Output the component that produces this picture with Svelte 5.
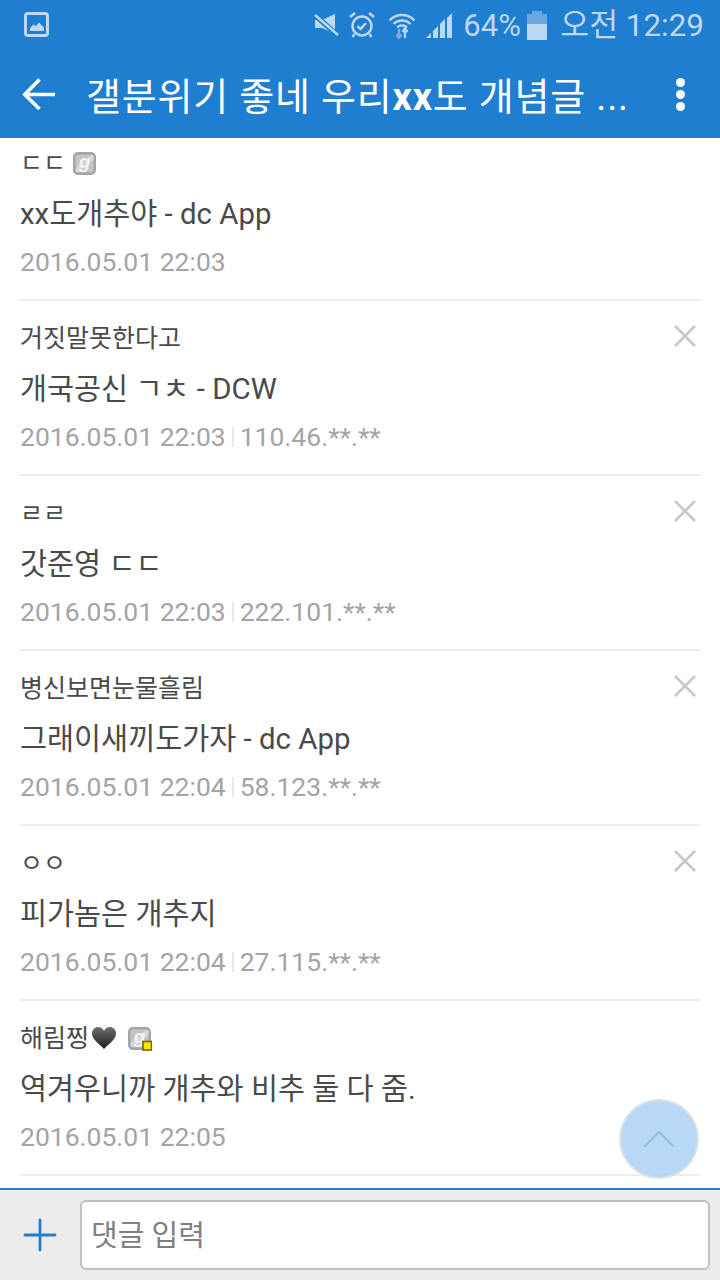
<script>
  const rows = [
    { name: 'ㄷㄷ', text: 'xx도개추야 - dc App', date: '2016.05.01 22:03', badge: true },
    { name: '거짓말못한다고', text: '개국공신 ㄱㅊ - DCW', date: '2016.05.01 22:03', ip: '110.46.**.**', del: true },
    { name: 'ㄹㄹ', text: '갓준영 ㄷㄷ', date: '2016.05.01 22:03', ip: '222.101.**.**', del: true },
    { name: '병신보면눈물흘림', text: '그래이새끼도가자 - dc App', date: '2016.05.01 22:04', ip: '58.123.**.**', del: true },
    { name: 'ㅇㅇ', text: '피가놈은 개추지', date: '2016.05.01 22:04', ip: '27.115.**.**', del: true },
    { name: '해림찡', text: '역겨우니까 개추와 비추 둘 다 줌.', date: '2016.05.01 22:05', heart: true, badge: true, fixed: true }
  ];
</script>

{#snippet gallogBadge(fixed)}
  <svg class="badge" viewBox="0 0 24 24" width="24" height="24">
    <rect x="1.200" y="1.200" width="20.600" height="20.600" rx="3.500" fill="#c4c4c4" stroke="#a4a4a4" stroke-width="2.400"/>
    <path d="M3 16L18 3h2.500v5L6 20H3z" fill="#d8d8d8"/>
    <text x="11.500" y="15.500" text-anchor="middle" class="badge-g">g</text>
    {#if fixed}
      <rect x="15" y="14.500" width="8.500" height="8.500" fill="#ffe600" stroke="#7a6400" stroke-width="1.600"/>
    {/if}
  </svg>
{/snippet}

<div class="screen">
  <header class="header">
    <div class="status">
      <svg class="pic" viewBox="0 0 26 26" width="26" height="26">
        <rect x="1.500" y="1.500" width="22" height="22" rx="2.500" fill="none" stroke="#bcd8f3" stroke-width="3"/>
        <path d="M6 19v-3l3.500-3.500 2.500 1.500 3-3.500 5 5v3.500z" fill="#bcd8f3"/>
      </svg>
      <div class="status-right">
        <svg viewBox="0 0 26 26" width="26" height="26">
          <path d="M2 8h7L22 2v20L9 16H2z" fill="#bcd8f3"/>
          <path d="M1 2l23 21" stroke="#1f7ecf" stroke-width="5.500"/>
          <path d="M2 3l23 20" stroke="#bcd8f3" stroke-width="2.400"/>
        </svg>
        <svg viewBox="0 0 28 28" width="28" height="28" fill="none" stroke="#bcd8f3" stroke-width="2.400">
          <circle cx="14" cy="15" r="9.500"/>
          <path d="M9.500 15l3 3 5.500-6M2 6l5-4M26 6l-5-4M6.500 23l-2 3M21.500 23l2 3"/>
        </svg>
        <svg class="wifi" viewBox="0 0 28 28" width="28" height="28" fill="none">
          <path d="M1.500 9.500a17 17 0 0 1 25 0M5.500 13a12 12 0 0 1 17 0M9 16.500a7 7 0 0 1 10 0" stroke="#bcd8f3" stroke-width="2.400"/>
          <path d="M11 18v9M8.500 23.500l2.500 3.500 2.500-3.500" stroke="#7fb2e3" stroke-width="2.200"/>
          <path d="M17 27v-9M14.500 21l2.500-3.500 2.500 3.500" stroke="#bcd8f3" stroke-width="2.200"/>
        </svg>
        <svg class="signal" viewBox="0 0 28 28" width="28" height="28">
          <path d="M1 27l5-5v5z" fill="#bcd8f3"/>
          <path d="M8 20l5-5v12H8z" fill="#bcd8f3"/>
          <path d="M15 13l5-5v19h-5z" fill="#bcd8f3"/>
          <path d="M22 7l5-5v25h-5z" fill="#bcd8f3"/>
        </svg>
        <span class="pct">64%</span>
        <span class="battery"><i></i></span>
        <span class="clock">오전 12:29</span>
      </div>
    </div>
    <div class="toolbar">
      <svg class="back" viewBox="0 0 34 34" width="34" height="34" fill="none" stroke="#fff" stroke-width="3.600">
        <path d="M33 17.500H3M17.500 2.500L2.800 17.500 17.500 32"/>
      </svg>
      <div class="title">갤분위기 좋네 우리<b>xx</b>도 개념글 ...</div>
      <div class="more"><i></i><i></i><i></i></div>
    </div>
  </header>

  <main class="list">
    <div class="rows">
      {#each rows as row}
        <div class="row">
          <div class="name">
            <span>{row.name}</span>
            {#if row.heart}
              <svg class="heart" viewBox="0 0 26 24" width="26" height="24">
                <defs>
                  <linearGradient id="hg" x1="0" y1="0" x2="0" y2="1">
                    <stop offset="0" stop-color="#6e6e6e"/>
                    <stop offset="1" stop-color="#1e1e1e"/>
                  </linearGradient>
                </defs>
                <path d="M13 23C7 17 1 13 1 7.500 1 3.500 4 1 7 1c2.600 0 4.800 1.400 6 3.800C14.200 2.400 16.400 1 19 1c3 0 6 2.500 6 6.500C25 13 19 17 13 23z" fill="url(#hg)"/>
              </svg>
            {/if}
            {#if row.badge}
              {@render gallogBadge(row.fixed)}
            {/if}
          </div>
          <div class="text">{row.text}</div>
          <div class="meta">
            <span>{row.date}</span>
            {#if row.ip}
              <i class="bar"></i>
              <span>{row.ip}</span>
            {/if}
          </div>
          {#if row.del}
            <svg class="del" viewBox="0 0 24 24" width="24" height="24" stroke="#c8c8c8" stroke-width="2.600">
              <path d="M2 2l20 20M22 2L2 22"/>
            </svg>
          {/if}
        </div>
      {/each}
    </div>
  </main>

  <button class="fab" aria-label="top">
    <svg viewBox="0 0 32 18" width="32" height="18" fill="none" stroke="#8fc0ea" stroke-width="2.400" stroke-linecap="round">
      <path d="M2 16L16 2l14 14"/>
    </svg>
  </button>

  <footer class="bottom">
    <svg class="plus" viewBox="0 0 34 34" width="34" height="34" stroke="#1f7ecf" stroke-width="2.800" stroke-linecap="round">
      <path d="M17 2v30M2 17h30"/>
    </svg>
    <div class="input">댓글 입력</div>
  </footer>
</div>

<style>
  :global(body) {
    margin: 0;
  }

  .screen {
    position: relative;
    width: 720px;
    height: 1280px;
    display: flex;
    flex-direction: column;
    overflow: hidden;
    background: #fff;
    font-family: Roboto, "Noto Sans CJK KR", sans-serif;
  }

  .header {
    background: #1f7ecf;
    flex: none;
  }

  .status {
    height: 50px;
    display: flex;
    align-items: center;
    justify-content: space-between;
    padding: 0 16px 0 24px;
    color: #bcd8f3;
  }

  .status-right {
    display: flex;
    align-items: center;
    gap: 9px;
  }

  .wifi {
    margin-left: 3px;
  }

  .pct {
    font-size: 31px;
    letter-spacing: 0.2px;
    margin-left: 1px;
  }

  .battery {
    width: 20px;
    height: 26px;
    margin-top: 4px;
    margin-left: -3px;
    background: #6ba8e0;
    position: relative;
  }

  .battery::before {
    content: "";
    position: absolute;
    left: 5px;
    top: -3px;
    width: 10px;
    height: 3px;
    background: #6ba8e0;
  }

  .battery i {
    position: absolute;
    left: 0;
    right: 0;
    bottom: 0;
    height: 16px;
    background: #bcd8f3;
  }

  .clock {
    font-size: 31.4px;
    margin-left: 4px;
    margin-top: -6px;
  }

  .toolbar {
    height: 88px;
    display: flex;
    align-items: center;
    padding: 0 35px 0 22px;
    color: #fff;
  }

  .back {
    flex: none;
    margin-right: 30px;
  }

  .title {
    flex: 1;
    font-size: 38px;
    letter-spacing: 0.8px;
    margin-top: -2px;
    white-space: nowrap;
    overflow: hidden;
  }

  .more {
    display: flex;
    flex-direction: column;
    gap: 3px;
  }

  .more i {
    width: 9px;
    height: 9px;
    background: #fff;
    border-radius: 50%;
  }

  .list {
    flex: 1;
    min-height: 0;
    overflow: hidden;
  }

  .rows {
    margin-top: -12px;
    padding: 0 20px;
  }

  .row {
    position: relative;
    height: 173px;
    border-bottom: 2px solid #eeeeee;
    display: flex;
    flex-direction: column;
  }

  .name {
    margin-top: 18px;
    height: 34px;
    display: flex;
    align-items: center;
    font-size: 25px;
    color: #4a4a4a;
  }

  .heart {
    margin-left: 2px;
    margin-top: 3px;
  }

  .badge {
    margin-left: 7px;
    margin-top: 6px;
  }

  .heart + .badge {
    margin-left: 11px;
  }

  .badge-g {
    font-family: "Liberation Sans", sans-serif;
    font-size: 19px;
    font-weight: 700;
    font-style: italic;
    fill: #f4f4f4;
  }

  .text {
    margin-top: 16px;
    height: 40px;
    line-height: 40px;
    font-size: 29.4px;
    color: #4a4a4a;
  }

  .meta {
    margin-top: 9px;
    display: flex;
    align-items: center;
    height: 36px;
    font-size: 26.5px;
    color: #a4a4a4;
  }

  .bar {
    width: 2px;
    height: 20px;
    background: #e8e8e8;
    margin: 2px 6px 0;
  }

  .del {
    position: absolute;
    right: 3px;
    top: 23px;
  }

  .fab {
    position: absolute;
    left: 619px;
    top: 1099px;
    width: 80px;
    height: 80px;
    padding: 0;
    border-radius: 50%;
    border: 2px solid rgba(225, 225, 225, 0.9);
    background: rgba(165, 208, 243, 0.8);
    display: flex;
    align-items: center;
    justify-content: center;
  }

  .bottom {
    flex: none;
    height: 92px;
    box-sizing: border-box;
    border-top: 2px solid #1f7ecf;
    background: #ececec;
    display: flex;
    align-items: center;
    padding: 0 10px 0 23px;
    gap: 23px;
  }

  .plus {
    flex: none;
  }

  .input {
    flex: 1;
    height: 70px;
    box-sizing: border-box;
    background: #fff;
    border: 2px solid #c0c0c0;
    border-radius: 6px;
    padding: 0 0 5px 9px;
    display: flex;
    align-items: center;
    font-size: 29px;
    color: #808080;
  }
</style>
